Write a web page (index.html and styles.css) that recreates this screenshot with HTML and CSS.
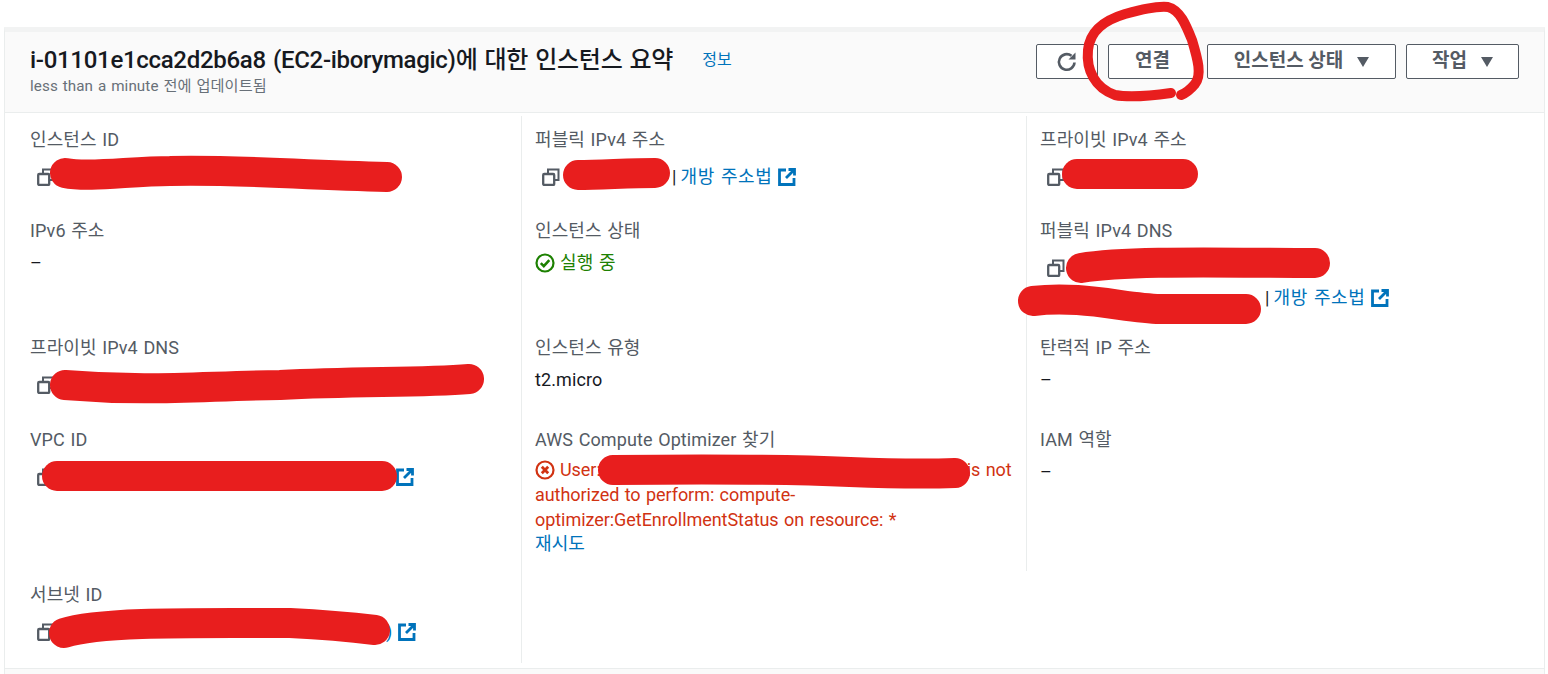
FILE: index.html
```html
<!doctype html>
<html lang="ko">
  <head>
    <meta charset="utf-8">
    <meta name="viewport" content="width=device-width, initial-scale=1">
    <title>인스턴스 요약</title>
    <link rel="stylesheet" href="styles.css">
  </head>
  <body>
    <svg class="icon-defs" width="0" height="0" aria-hidden="true">
      <symbol id="copy" viewBox="0 0 18 18">
        <path d="M6 5V1.500h10.500V12H13" fill="none" stroke="currentColor" stroke-width="2"/>
        <rect x="1.200" y="6" width="11" height="11" rx="1" fill="none" stroke="currentColor" stroke-width="2.300"/>
      </symbol>
      <symbol id="external" viewBox="0 0 18 18">
        <path d="M8 2H1.500v14.500H16V10M10.500 1.500H16.500V7.500M16 2L8 10" fill="none" stroke="currentColor" stroke-width="2.800"/>
      </symbol>
    </svg>

    <div class="top-space"></div>

    <div class="card">
      <div class="card-header">
        <div class="title-block">
          <div class="title-line">
            <h1>i-01101e1cca2d2b6a8 (EC2-iborymagic)에 대한 인스턴스 요약</h1>
            <a class="info-link">정보</a>
          </div>
          <p class="updated">less than a minute 전에 업데이트됨</p>
        </div>
        <div class="actions">
          <button class="btn btn-refresh" aria-label="새로 고침">
            <svg width="22" height="22" viewBox="0 0 22 22"><path d="M18.500 11.500A7.800 7.800 0 1 1 15.500 4.800" fill="none" stroke="currentColor" stroke-width="2.600"/><path d="M19.500 1.500V8.500H12.500Z" fill="currentColor"/></svg>
          </button>
          <button class="btn btn-connect"><span class="btn-text">연결</span></button>
          <button class="btn btn-state"><span class="btn-text">인스턴스 상태</span><span class="caret"></span></button>
          <button class="btn btn-work"><span class="btn-text">작업</span><span class="caret"></span></button>
        </div>
      </div>

      <div class="summary">
        <div class="cell">
          <div class="label">인스턴스 ID</div>
          <div class="value copy-row"><svg class="copy-icon"><use href="#copy"/></svg></div>
        </div>
        <div class="cell divided">
          <div class="label">퍼블릭 IPv4 주소</div>
          <div class="value copy-row"><svg class="copy-icon"><use href="#copy"/></svg><span class="hidden-text ip-public"></span><span class="pipe">|</span><a class="link open-address">개방 주소법</a><svg class="ext-icon"><use href="#external"/></svg></div>
        </div>
        <div class="cell divided">
          <div class="label">프라이빗 IPv4 주소</div>
          <div class="value copy-row"><svg class="copy-icon"><use href="#copy"/></svg></div>
        </div>

        <div class="cell">
          <div class="label">IPv6 주소</div>
          <div class="value">–</div>
        </div>
        <div class="cell divided">
          <div class="label">인스턴스 상태</div>
          <div class="value status-ok">
            <svg class="status-icon" viewBox="0 0 20 20"><circle cx="10" cy="10" r="8.500" fill="none" stroke="currentColor" stroke-width="2.200"/><path d="M5.800 10.200l3 3 5.500-6" fill="none" stroke="currentColor" stroke-width="2.600"/></svg>실행 중
          </div>
        </div>
        <div class="cell divided">
          <div class="label">퍼블릭 IPv4 DNS</div>
          <div class="value copy-row"><svg class="copy-icon"><use href="#copy"/></svg></div>
          <div class="value dns-second"><span class="hidden-text dns-name"></span><span class="pipe">|</span><a class="link open-address">개방 주소법</a><svg class="ext-icon"><use href="#external"/></svg></div>
        </div>

        <div class="cell">
          <div class="label">프라이빗 IPv4 DNS</div>
          <div class="value copy-row"><svg class="copy-icon"><use href="#copy"/></svg></div>
        </div>
        <div class="cell divided">
          <div class="label">인스턴스 유형</div>
          <div class="value">t2.micro</div>
        </div>
        <div class="cell divided">
          <div class="label">탄력적 IP 주소</div>
          <div class="value">–</div>
        </div>

        <div class="cell">
          <div class="label">VPC ID</div>
          <div class="value copy-row"><svg class="copy-icon"><use href="#copy"/></svg><span class="hidden-text vpc-id"></span><svg class="ext-icon"><use href="#external"/></svg></div>
        </div>
        <div class="cell divided">
          <div class="label">AWS Compute Optimizer 찾기</div>
          <div class="value status-error">
            <svg class="status-icon" viewBox="0 0 20 20"><circle cx="10" cy="10" r="8.500" fill="none" stroke="currentColor" stroke-width="2.200"/><path d="M6.800 6.800l6.400 6.400M13.200 6.800l-6.400 6.400" fill="none" stroke="currentColor" stroke-width="2.800"/></svg>User:<span class="hidden-text user-arn"></span>is not<br>authorized to perform: compute-<br>optimizer:GetEnrollmentStatus on resource: *
          </div>
          <a class="link retry">재시도</a>
        </div>
        <div class="cell divided">
          <div class="label">IAM 역할</div>
          <div class="value">–</div>
        </div>

        <div class="cell">
          <div class="label">서브넷 ID</div>
          <div class="value copy-row"><svg class="copy-icon"><use href="#copy"/></svg><span class="hidden-text subnet-id"></span><a class="link">)</a><svg class="ext-icon"><use href="#external"/></svg></div>
        </div>
        <div class="cell divided"></div>
      </div>
      <div class="card-footer"></div>
    </div>

    <!-- red marker strokes drawn over the screenshot -->
    <svg class="marker" width="1548" height="674" viewBox="0 0 1548 674" aria-hidden="true">
      <g fill="none" stroke="#e81e1e" stroke-linecap="round" stroke-linejoin="round">
        <path class="thick" d="M65 173C90 178 130 171 170 171C230 169 300 175 387 177"/>
        <path class="thick" d="M578 175C600 175 630 173 655 173"/>
        <path class="thick" d="M1077 174L1183 174"/>
        <path class="thick" d="M1081 268C1130 260 1230 263 1315 263"/>
        <path class="thick" d="M1033 301C1080 295 1125 308 1160 309L1246 309"/>
        <path class="thick" d="M65 385C150 392 200 386 280 385C360 381 420 383 469 379"/>
        <path class="thick" d="M57 476L382 476"/>
        <path class="thick" d="M613 470C700 469 780 469 850 472C900 474 930 474 955 473"/>
        <path class="thick" d="M64 633C100 621 200 623 290 623C330 625 350 627 375 630"/>
        <path class="ring" d="M1171 93C1150 96 1130 98 1115 95C1095 88 1086 70 1088 50C1090 30 1105 20 1125 14C1140 10 1155 6 1168 7C1180 10 1186 25 1192 40C1198 60 1202 75 1195 84C1190 90 1186 93 1181 95"/>
      </g>
    </svg>
  </body>
</html>
```

FILE: styles.css
```css
/* Reset */
* {
  margin: 0;
  padding: 0;
  box-sizing: border-box;
}

html,
body {
  height: 674px;
  overflow: hidden;
}

body {
  position: relative;
  background-color: #fff;
  color: #16191f;
  font-family: Roboto, "Noto Sans CJK KR", sans-serif;
  font-size: 18px;
  letter-spacing: 0.1px;
  word-spacing: 1px;
  line-height: 24px;
}

.icon-defs {
  display: block;
  height: 0;
}

.top-space {
  height: 27px;
  background-color: #fff;
}

/* Card */
.card {
  margin-left: 4px;
  margin-right: 3px;
  border-top: 5px solid #f2f3f3;
  border-left: 1px solid #eaeded;
  border-right: 1px solid #eaeded;
}

.card-header {
  height: 81px;
  padding: 0 25px;
  display: flex;
  justify-content: space-between;
  align-items: flex-start;
  background-color: #fafafa;
  border-bottom: 1px solid #eaeded;
}

.title-line {
  display: flex;
  align-items: center;
  margin-top: 13px;
  height: 30px;
}

h1 {
  font-size: 24px;
  font-weight: 500;
  line-height: 30px;
  letter-spacing: -0.3px;
  word-spacing: 1.500px;
}

.info-link {
  margin-left: 29px;
  font-size: 16px;
  color: #0073bb;
}

.updated {
  margin-top: 0;
  font-size: 15.200px;
  line-height: 22px;
  color: #687078;
}

/* Action buttons */
.actions {
  display: flex;
  gap: 10px;
  margin-top: 12px;
}

.btn {
  height: 35px;
  display: flex;
  align-items: center;
  justify-content: center;
  background-color: #fff;
  border: 1px solid #545b64;
  border-radius: 2px;
  color: #545b64;
  font-family: inherit;
  font-size: 19px;
  font-weight: 700;
}

.btn-text {
  margin-top: -7px;
}

.btn-refresh { width: 62px; }
.btn-connect { width: 89px; }
.btn-state { width: 189px; }
.btn-work { width: 113px; }

.caret {
  width: 0;
  height: 0;
  margin-left: 14px;
  border-left: 6px solid transparent;
  border-right: 6px solid transparent;
  border-top: 10px solid #545b64;
}

/* Summary grid */
.summary {
  display: grid;
  grid-template-columns: 516px 505px 1fr;
  grid-template-rows: 91px 117px 92px 155px 92px;
  margin-top: 3px;
}

.cell {
  padding: 12px 14px 0 25px;
}

.cell.divided {
  padding-left: 13px;
  border-left: 1px solid #eaeded;
}

.label {
  color: #545b64;
}

.value {
  margin-top: 8px;
}

.copy-row {
  display: flex;
  align-items: center;
  height: 24px;
  margin-top: 13px;
}

.copy-icon {
  width: 18px;
  height: 18px;
  margin-left: 7px;
  margin-right: 1px;
  color: #545b64;
  flex-shrink: 0;
}

.ext-icon {
  width: 18px;
  height: 18px;
  margin-left: 6px;
  color: #0073bb;
  flex-shrink: 0;
}

.link,
.retry {
  color: #0073bb;
}

.open-address {
  letter-spacing: 0.6px;
}

.retry {
  display: block;
}

.pipe {
  margin-right: 4px;
  color: #16191f;
}

/* Placeholders for text under the marker */
.hidden-text {
  display: inline-block;
  height: 1px;
}

.ip-public { width: 111px; }
.vpc-id { width: 334px; }
.subnet-id { width: 330px; }
.user-arn { width: 366px; }
.dns-name { width: 225px; }

.dns-second {
  display: flex;
  align-items: center;
  margin-top: 6px;
}

/* Status values */
.status-icon {
  width: 20px;
  height: 20px;
  margin-right: 5px;
  vertical-align: -4px;
}

.status-ok { color: #1d8102; }

.status-error {
  margin-top: 5px;
  color: #d13212;
  letter-spacing: -0.050px;
  line-height: 25px;
  white-space: nowrap;
}

.card-footer {
  margin-top: 5px;
  height: 6px;
  background-color: #fafafa;
  border-top: 1px solid #eaeded;
}

/* Marker overlay */
.marker {
  position: absolute;
  top: 0;
  left: 0;
}

.thick { stroke-width: 30px; }
.ring { stroke-width: 10px; }
```
